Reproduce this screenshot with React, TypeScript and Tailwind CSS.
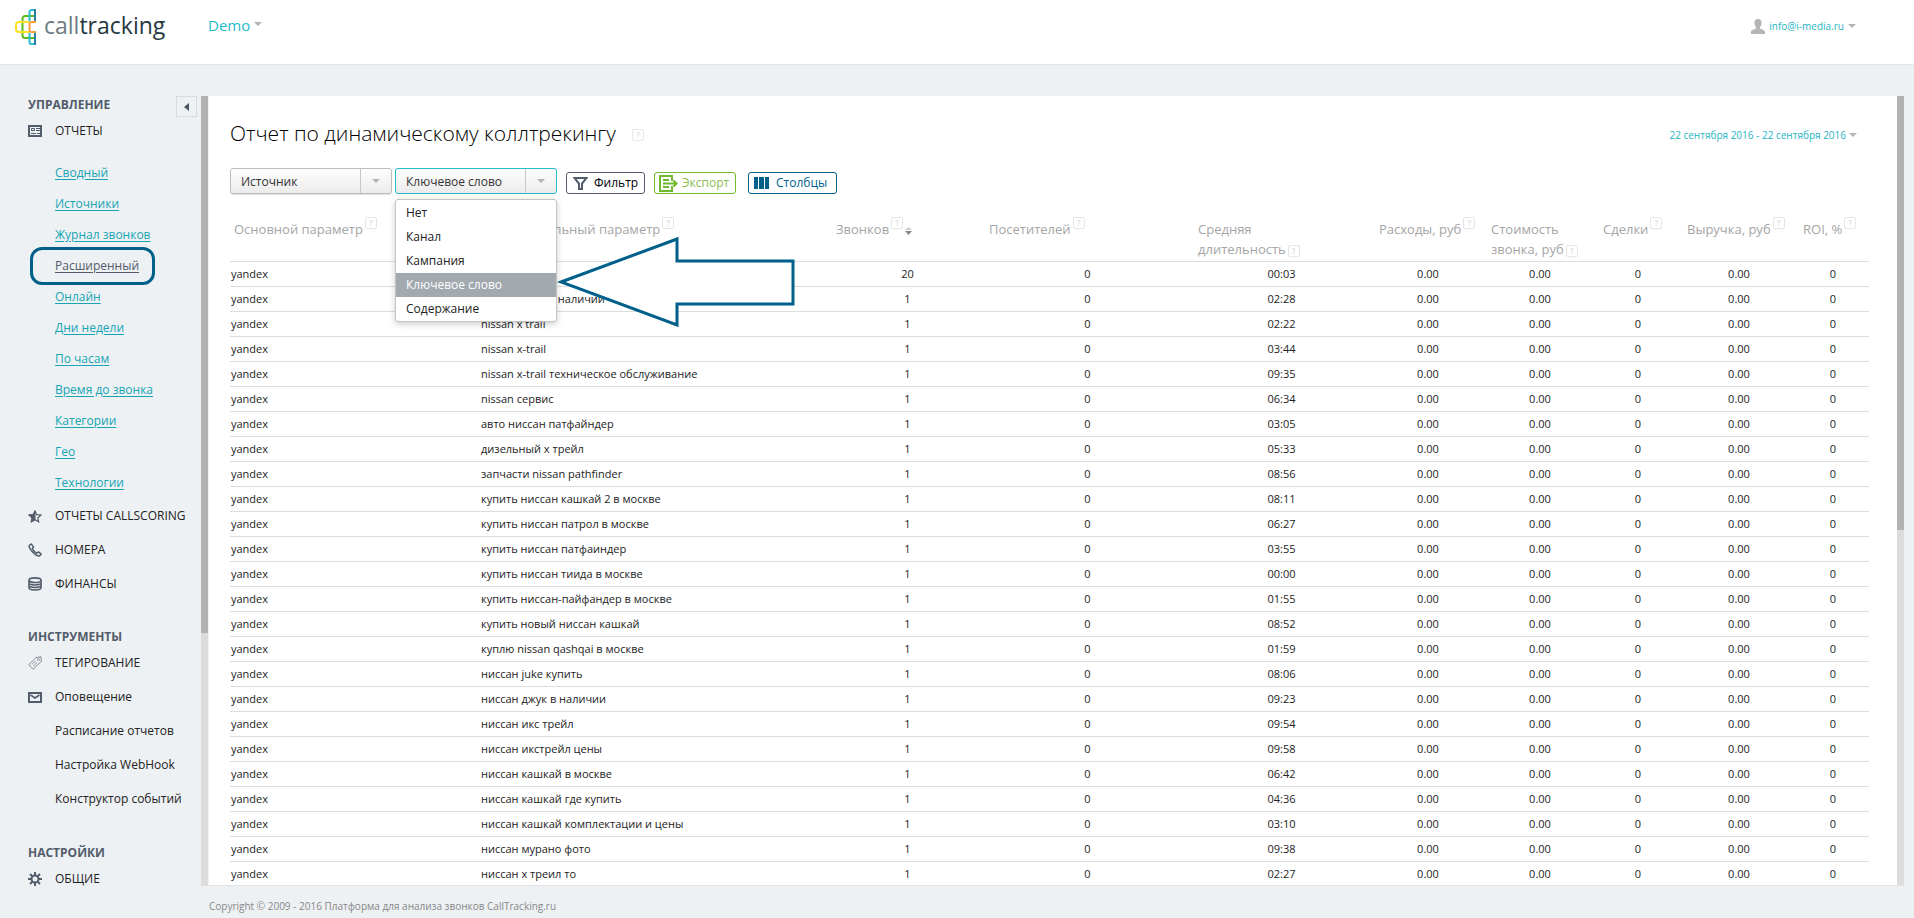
import type { ReactNode } from 'react'

const reportLinks = [
  'Сводный',
  'Источники',
  'Журнал звонков',
  'Расширенный',
  'Онлайн',
  'Дни недели',
  'По часам',
  'Время до звонка',
  'Категории',
  'Гео',
  'Технологии',
]

const menuOptions = ['Нет', 'Канал', 'Кампания', 'Ключевое слово', 'Содержание']

const columns = [
  { label: 'Основной параметр', width: 'w-[250px]' },
  { label: 'Дополнительный параметр', width: 'w-[352px]' },
  { label: 'Звонков', width: 'w-[153px]', sortable: true },
  { label: 'Посетителей', width: 'w-[209px]' },
  { label: 'Средняя длительность', width: 'w-[181px]', lines: ['Средняя', 'длительность'] },
  { label: 'Расходы, руб', width: 'w-[112px]' },
  { label: 'Стоимость звонка, руб', width: 'w-[112px]', lines: ['Стоимость', 'звонка, руб'] },
  { label: 'Сделки', width: 'w-[84px]' },
  { label: 'Выручка, руб', width: 'w-[116px]' },
  { label: 'ROI, %', width: 'w-[70px]' },
]

const rows = [
  { keyword: 'nissan', calls: 20, duration: '00:03' },
  { keyword: 'nissan teana в наличии', calls: 1, duration: '02:28' },
  { keyword: 'nissan x trail', calls: 1, duration: '02:22' },
  { keyword: 'nissan x-trail', calls: 1, duration: '03:44' },
  { keyword: 'nissan x-trail техническое обслуживание', calls: 1, duration: '09:35' },
  { keyword: 'nissan сервис', calls: 1, duration: '06:34' },
  { keyword: 'авто ниссан патфайндер', calls: 1, duration: '03:05' },
  { keyword: 'дизельный х трейл', calls: 1, duration: '05:33' },
  { keyword: 'запчасти nissan pathfinder', calls: 1, duration: '08:56' },
  { keyword: 'купить ниссан кашкай 2 в москве', calls: 1, duration: '08:11' },
  { keyword: 'купить ниссан патрол в москве', calls: 1, duration: '06:27' },
  { keyword: 'купить ниссан патфаиндер', calls: 1, duration: '03:55' },
  { keyword: 'купить ниссан тиида в москве', calls: 1, duration: '00:00' },
  { keyword: 'купить ниссан-пайфандер в москве', calls: 1, duration: '01:55' },
  { keyword: 'купить новый ниссан кашкай', calls: 1, duration: '08:52' },
  { keyword: 'куплю nissan qashqai в москве', calls: 1, duration: '01:59' },
  { keyword: 'ниссан juke купить', calls: 1, duration: '08:06' },
  { keyword: 'ниссан джук в наличии', calls: 1, duration: '09:23' },
  { keyword: 'ниссан икс трейл', calls: 1, duration: '09:54' },
  { keyword: 'ниссан икстрейл цены', calls: 1, duration: '09:58' },
  { keyword: 'ниссан кашкай в москве', calls: 1, duration: '06:42' },
  { keyword: 'ниссан кашкай где купить', calls: 1, duration: '04:36' },
  { keyword: 'ниссан кашкай комплектации и цены', calls: 1, duration: '03:10' },
  { keyword: 'ниссан мурано фото', calls: 1, duration: '09:38' },
  { keyword: 'ниссан х треил то', calls: 1, duration: '02:27' },
]

function Logo() {
  return (
    <svg width="22" height="36" viewBox="0 0 22 36" fill="none" strokeWidth="2" aria-hidden="true">
      <path d="M20 7H10a2.500 2.500 0 0 0-2.500 2.500v17a2.500 2.500 0 0 0 2.500 2.500h10" stroke="#5fba1e" />
      <path d="M20 1H16.500a2 2 0 0 0-2 2v9M20 35H16.500a2 2 0 0 1-2-2v-9" stroke="#27c0d2" />
      <path d="M20 0v12M20 24v12" stroke="#2b7fa3" />
      <path d="M14 13H4a3 3 0 0 0-3 3v4a3 3 0 0 0 3 3h10" stroke="#fbe122" />
      <path d="M21 13H16.500a2 2 0 0 0-2 2v6a2 2 0 0 0 2 2H21" stroke="#f9a03c" />
    </svg>
  )
}

function Caret({ className = '' }: { className?: string }) {
  return (
    <svg width="8" height="4" viewBox="0 0 8 4" className={`shrink-0 ${className}`} aria-hidden="true">
      <path d="M0 0h8L4 4z" fill="#b3b3b3" />
    </svg>
  )
}

function Help({ className = '' }: { className?: string }) {
  return (
    <span
      className={`inline-flex h-3 w-3 items-center justify-center rounded-xs border border-[#e6e6e6] text-[8px] leading-none font-bold text-[#e2e2e2] ${className}`}
    >
      ?
    </span>
  )
}

function MenuItem({ icon, children }: { icon?: ReactNode; children: ReactNode }) {
  return (
    <a href="#" className="flex h-[34px] items-center text-[#222]">
      <span className="flex w-[27px] text-[#525c6b]">{icon}</span>
      {children}
    </a>
  )
}

function SectionTitle({ children }: { children: ReactNode }) {
  return <h2 className="text-xs leading-[18px] font-bold text-[#525c6b]">{children}</h2>
}

function Dropdown({ label, value, open = false }: { label: string; value: string; open?: boolean }) {
  return (
    <div className="relative w-[162px]">
      <select
        aria-label={label}
        defaultValue={value}
        className={`block h-[26px] w-full appearance-none rounded-[3px] border bg-linear-to-b from-white to-[#ebebeb] pt-0.5 pl-[10px] text-xs text-[#333] ${
          open ? 'border-[#1fbccb]' : 'border-[#bdbdbd] shadow-[0_1px_1px_#ddd]'
        }`}
      >
        <option>{value}</option>
      </select>
      <span className="pointer-events-none absolute inset-y-px right-px flex w-[31px] items-center justify-center border-l border-[#c8c8c8]">
        <Caret />
      </span>
      {open && (
        <ul
          role="listbox"
          aria-label={label}
          className="absolute top-[31px] left-0 z-20 w-full rounded-[3px] border border-[#c4c4c4] bg-white pt-px text-xs text-[#222] shadow-[0_2px_6px_rgba(0,0,0,0.2)]"
        >
          {menuOptions.map((option) => (
            <li
              key={option}
              role="option"
              aria-selected={option === value}
              className={`flex h-6 items-center pl-[10px] ${option === value ? 'bg-[#a2a9af] text-white' : ''}`}
            >
              {option}
            </li>
          ))}
        </ul>
      )}
    </div>
  )
}

function Header() {
  return (
    <header className="flex h-[65px] shrink-0 items-start border-b border-[#dfe4e8] bg-white">
      <a href="#" className="mt-[9px] ml-[15px] flex w-[193px] items-start gap-[7px]">
        <Logo />
        <span className="text-[23px] leading-8 text-[#26383f]">
          <span className="text-[#6d7c83]">call</span>tracking
        </span>
      </a>
      <button className="mt-[14px] flex items-start gap-1 text-[15px] leading-[22px] text-[#1fbccb]">
        Demo
        <Caret className="mt-2" />
      </button>
      <button className="mt-[17px] mr-[58px] ml-auto flex items-center gap-1 text-[10px] leading-[18px] text-[#1fb5c4]">
        <svg width="14" height="15" viewBox="0 0 14 15" fill="#b5b5b5" aria-hidden="true">
          <path d="M7 0c2.400 0 3.700 1.600 3.600 4-.1 2-.9 3.300-1.700 4.200v1.200c1.600.7 5.100 1.500 5.100 3.600v2H0v-2c0-2.100 3.500-2.900 5.100-3.600V8.200C4.300 7.300 3.500 6 3.400 4 3.300 1.600 4.600 0 7 0z" />
        </svg>
        info@i-media.ru
        <Caret />
      </button>
    </header>
  )
}

function Sidebar() {
  return (
    <aside className="relative w-[201px] shrink-0 overflow-hidden pl-7 text-xs">
      <button
        aria-label="Свернуть меню"
        className="absolute top-0 right-1 flex h-[21px] w-[21px] items-center justify-center border border-[#dadada]"
      >
        <svg width="5" height="8" viewBox="0 0 5 8" aria-hidden="true">
          <path d="M5 0v8L0 4z" fill="#4a5463" />
        </svg>
      </button>
      <SectionTitle>УПРАВЛЕНИЕ</SectionTitle>
      <MenuItem
        icon={
          <svg width="14" height="12" viewBox="0 0 14 12" fill="none" stroke="currentColor" aria-hidden="true">
            <path d="M1 1h12v10H1z" strokeWidth="2" />
            <path d="M3.500 3.500h3v2h-3zM8 3.500h4M8 5.500h4M3 8.500h5M9 8.500h3" />
          </svg>
        }
      >
        ОТЧЕТЫ
      </MenuItem>
      <nav className="flex flex-col items-start pt-[9px] pb-px pl-[27px]">
        {reportLinks.map((link) =>
          link === 'Расширенный' ? (
            <div key={link} className="relative flex h-[31px] items-center">
              <a href="#" aria-current="page" className="text-[#525c6b] underline underline-offset-2">
                {link}
              </a>
              <span className="pointer-events-none absolute -top-[3px] -left-[25px] h-[38px] w-[125px] rounded-xl border-3 border-[#00608a]" />
            </div>
          ) : (
            <div key={link} className="flex h-[31px] items-center">
              <a href="#" className="text-[#17a5b3] underline underline-offset-2">
                {link}
              </a>
            </div>
          ),
        )}
      </nav>
      <MenuItem
        icon={
          <svg width="14" height="13" viewBox="0 0 14 13" fill="none" stroke="currentColor" aria-hidden="true">
            <path d="m7 1 1.700 3.700 4.300.4-3.200 2.700.9 4L7 9.800l-3.700 2 .9-4L1 5.100l4.300-.4z" strokeWidth="1.200" />
            <path d="M7 1v8.800l-3.700 2 .9-4L1 5.100l4.300-.4z" fill="currentColor" />
          </svg>
        }
      >
        ОТЧЕТЫ CALLSCORING
      </MenuItem>
      <MenuItem
        icon={
          <svg width="14" height="14" viewBox="0 0 14 14" fill="none" stroke="currentColor" strokeWidth="1.500" aria-hidden="true">
            <path
              d="M3.200 1 1.300 2.300C.3 5.500 7.500 13.300 11.500 12.900l1.700-1.800-2.700-2.200-1.700 1.300C7.500 9.800 4.600 6.800 4.200 5.400l1.300-1.500z"
              strokeLinejoin="round"
            />
          </svg>
        }
      >
        НОМЕРА
      </MenuItem>
      <MenuItem
        icon={
          <svg width="14" height="14" viewBox="0 0 14 14" fill="none" stroke="currentColor" strokeWidth="1.600" aria-hidden="true">
            <ellipse cx="7" cy="3.200" rx="6" ry="2.300" />
            <path d="M1 3.200v7.600c0 3 12 3 12 0V3.200M1 6c0 2.600 12 2.600 12 0M1 8.500c0 2.600 12 2.600 12 0" />
          </svg>
        }
      >
        ФИНАНСЫ
      </MenuItem>

      <div className="mt-[27px]">
        <SectionTitle>ИНСТРУМЕНТЫ</SectionTitle>
        <MenuItem
          icon={
            <svg width="14" height="14" viewBox="0 0 14 14" fill="none" stroke="#858c96" aria-hidden="true">
              <path d="M8 1.500 13 .8l.3 4.700L5 13.300.8 8.700z" strokeLinejoin="round" />
              <path d="M4 8.500 7.500 5M5.500 10 9 6.700" />
              <circle cx="10.500" cy="3.500" r="1" />
            </svg>
          }
        >
          ТЕГИРОВАНИЕ
        </MenuItem>
        <MenuItem
          icon={
            <svg width="14" height="11" viewBox="0 0 14 11" fill="none" stroke="currentColor" aria-hidden="true">
              <path d="M1 1h12v9H1z" strokeWidth="2" />
              <path d="m2.500 3 4.500 3 4.500-3" strokeWidth="1.600" />
            </svg>
          }
        >
          Оповещение
        </MenuItem>
        <MenuItem>Расписание отчетов</MenuItem>
        <MenuItem>Настройка WebHook</MenuItem>
        <MenuItem>Конструктор событий</MenuItem>
      </div>

      <div className="mt-7">
        <SectionTitle>НАСТРОЙКИ</SectionTitle>
        <MenuItem
          icon={
            <svg width="14" height="14" viewBox="0 0 14 14" fill="none" stroke="currentColor" strokeWidth="2" aria-hidden="true">
              <circle cx="7" cy="7" r="3.500" />
              <path d="M7 0v3M7 11v3M0 7h3M11 7h3M2 2l2 2M10 10l2 2M12 2l-2 2M4 10l-2 2" />
            </svg>
          }
        >
          ОБЩИЕ
        </MenuItem>
      </div>
    </aside>
  )
}

function Toolbar() {
  return (
    <div className="flex items-start gap-[3px]">
      <Dropdown label="Основной параметр" value="Источник" />
      <Dropdown label="Дополнительный параметр" value="Ключевое слово" open />
      <div className="mt-1 ml-1.5 flex gap-[9px] text-xs">
        <button className="flex h-[22px] w-[79px] items-center gap-1.5 rounded-[3px] border border-[#525c6b] pl-1.5 text-black">
          <svg width="15" height="13" viewBox="0 0 15 13" fill="none" stroke="#525c6b" strokeWidth="2" aria-hidden="true">
            <path d="M1.500 1h12L9 6.500V12H6V6.500z" />
          </svg>
          Фильтр
        </button>
        <button className="flex h-[22px] w-[82px] items-center gap-1 rounded-[3px] border border-[#72b92e] pl-1 text-[#8cc152]">
          <svg width="19" height="17" viewBox="0 0 19 17" fill="none" stroke="#72b92e" strokeWidth="2" aria-hidden="true">
            <path d="M13 6V1H1v15h12v-5" />
            <path d="M4 5h6M4 8.500h13M4 12h6M14.500 5.500l3 3-3 3" />
          </svg>
          Экспорт
        </button>
        <button className="ml-[3px] flex h-[22px] w-[89px] items-center gap-[7px] rounded-[3px] border border-[#00608a] pl-[5px] text-[#00608a]">
          <svg width="15" height="12" viewBox="0 0 15 12" fill="#00608a" aria-hidden="true">
            <path d="M0 0h4v12H0zM5 0h5v12H5zM11 0h4v12h-4z" />
          </svg>
          Столбцы
        </button>
      </div>
      {/* callout arrow pointing at the chosen option */}
      <div className="relative w-0">
        <svg width="238" height="92" viewBox="0 0 238 92" className="absolute top-[67px] -left-[283px]" aria-hidden="true">
          <path d="M4 47 120 4v22h116v43H120v21z" fill="#fff" stroke="#00608a" strokeWidth="3" />
        </svg>
      </div>
    </div>
  )
}

function ReportTable() {
  return (
    <table className="mt-[17px] w-full table-fixed border-collapse text-[11px] text-[#222]">
      <colgroup>
        {columns.map((column) => (
          <col key={column.label} className={column.width} />
        ))}
      </colgroup>
      <thead>
        <tr className="h-[50px] border-b border-[#ddd] text-left align-top text-[13px] leading-5 whitespace-nowrap text-[#a5a5a5]">
          {columns.map((column) => (
            <th key={column.label} scope="col" className="pt-2 pl-1 font-normal">
              {column.lines ? (
                <>
                  {column.lines[0]}
                  <br />
                  {column.lines[1]}
                  <Help className="ml-0.5 align-middle" />
                </>
              ) : (
                <span className="flex">
                  {column.label}
                  <Help className="-mt-0.5 ml-0.5" />
                  {column.sortable && (
                    <svg width="7" height="8" viewBox="0 0 7 8" className="mt-2 ml-0.5" aria-hidden="true">
                      <path d="M0 3h7L3.500 0z" fill="#ccc" />
                      <path d="M0 4h7L3.500 8z" fill="#888" />
                    </svg>
                  )}
                </span>
              )}
            </th>
          ))}
        </tr>
      </thead>
      <tbody>
        {rows.map((row) => (
          <tr key={row.keyword} className="h-[25px] border-b border-[#ddd] text-center">
            <td className="pt-0.5 pl-px text-left">yandex</td>
            <td className="pt-0.5 pl-px text-left">{row.keyword}</td>
            <td className="pt-0.5 pr-0.5">{row.calls}</td>
            <td className="pt-0.5 pr-1">0</td>
            <td className="pt-0.5 pr-1.5">{row.duration}</td>
            <td className="pt-0.5 pr-1.5">0.00</td>
            <td className="pt-0.5 pr-1.5">0.00</td>
            <td className="pt-0.5 pr-1.5">0</td>
            <td className="pt-0.5 pr-1">0.00</td>
            <td className="pt-0.5 pr-0.5">0</td>
          </tr>
        ))}
      </tbody>
    </table>
  )
}

export default function App() {
  return (
    <div className="flex h-screen flex-col overflow-hidden bg-[#edf1f4] font-['Open_Sans','Noto_Sans',sans-serif]">
      <Header />
      <div className="mt-[31px] flex min-h-0 flex-1">
        <Sidebar />
        <div className="w-[7px] shrink-0 bg-[#dcdcdc]">
          <div className="h-[68%] bg-[#b2b2b2]" />
        </div>
        <main className="ml-px flex min-w-0 flex-1 overflow-hidden border-b border-[#e0e4e7] bg-white">
          <div className="min-w-0 flex-1 pr-7 pl-[21px]">
            <div className="flex items-center pt-[21px] pb-[19px]">
              <h1 className="text-[21px] leading-8 font-light text-black">Отчет по динамическому коллтрекингу</h1>
              <Help className="mt-1 ml-4" />
              <button className="mt-1 mr-3 ml-auto flex items-center gap-[3px] text-[10px] leading-[18px] text-[#1fb5c4]">
                22 сентября 2016 - 22 сентября 2016
                <Caret />
              </button>
            </div>
            <Toolbar />
            <ReportTable />
          </div>
          <div className="w-[7px] shrink-0 bg-[#dcdcdc]">
            <div className="h-[55%] bg-[#b2b2b2]" />
          </div>
        </main>
        <div className="w-[10px] shrink-0" />
      </div>
      <footer className="h-8 shrink-0 pt-[11px] pl-[209px] text-[10px] leading-[18px] text-[#888]">
        Copyright © 2009 - 2016 Платформа для анализа звонков CallTracking.ru
      </footer>
    </div>
  )
}
